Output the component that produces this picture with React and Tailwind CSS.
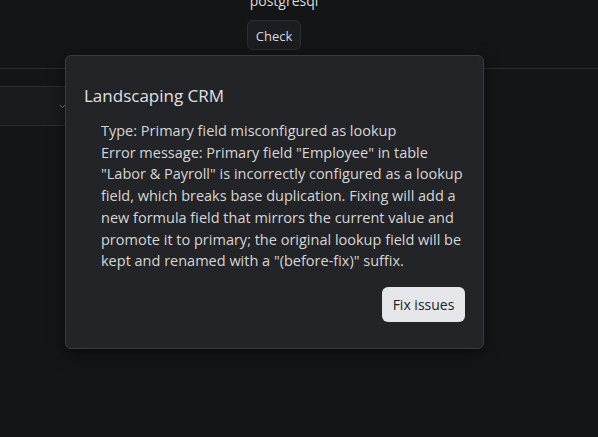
export default function App() {
  const lines = [
    "Type: Primary field misconfigured as lookup",
    'Error message: Primary field "Employee" in table',
    '"Labor & Payroll" is incorrectly configured as a lookup',
    "field, which breaks base duplication. Fixing will add a",
    "new formula field that mirrors the current value and",
    "promote it to primary; the original lookup field will be",
    'kept and renamed with a "(before-fix)" suffix.',
  ];

  return (
    <div
      className="relative w-[598px] h-[437px] overflow-hidden bg-[#141517] text-[#d4d4d4]"
      style={{ fontFamily: '"Open Sans", "Noto Sans", sans-serif' }}
    >
      {/* header with db name */}
      <div className="flex flex-col items-center border-b border-[#2a2b2e] h-[78px] -mt-[9px]">
        <span className="text-[14px] leading-[20px] ml-[-30px] text-[#dcdcdc]">postgresql</span>
        <button className="mt-[9px] ml-[-50px] h-[30px] w-[54px] pt-[3px] rounded-md border border-[#2c2d31] bg-[#1c1d20] text-[13px] text-[#d8d8d8]">
          Check
        </button>
      </div>

      {/* select row behind the dialog */}
      <div className="mt-[17px] flex h-[40px] w-[120px] items-center justify-end border-y border-[#2c2d30] bg-[#1a1b1e] pr-[53px]">
        <svg width="9" height="9" viewBox="0 0 24 24" fill="none" stroke="#8a8b8e" strokeWidth="2.5" strokeLinecap="round">
          <path d="M6 9l6 6 6-6" />
        </svg>
      </div>

      {/* issues popover */}
      <div className="absolute left-[65px] top-[55px] w-[419px] h-[294px] rounded-[6px] border border-[#3a3b3f] bg-[#232427] shadow-[0_4px_16px_rgba(0,0,0,0.5)] pl-[18px] pr-[18px] pt-[29px]">
        <h2 className="text-[17px] leading-[22px] text-[#e0e0e0]">Landscaping CRM</h2>
        <div className="mt-[13px] pl-[17px] text-[14.5px] leading-[21.7px] text-[#d6d6d6]">
          {lines.map((l) => (
            <div key={l} className="whitespace-nowrap">
              {l}
            </div>
          ))}
        </div>
        <div className="mt-[15px] flex justify-end">
          <button className="h-[35px] w-[83px] rounded-md bg-[#e4e6e9] text-[14px] text-[#222326]">
            Fix issues
          </button>
        </div>
      </div>
    </div>
  );
}
